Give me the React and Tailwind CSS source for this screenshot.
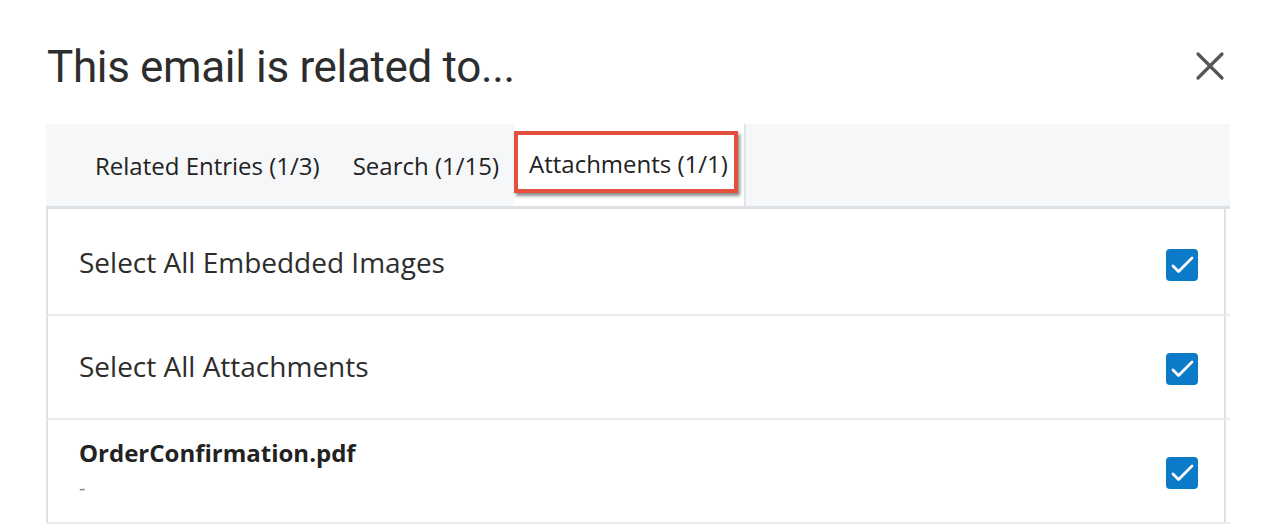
import React, { useState } from 'react';

const Check = ({ checked, onClick }) => (
  <button
    onClick={onClick}
    className={`w-8 h-8 rounded-[4px] flex items-center justify-center mt-[4px] ${checked ? 'bg-[#0b7ac9]' : 'bg-white border-2 border-[#9aa3ad]'}`}
  >
    {checked && (
      <svg width="32" height="32" viewBox="0 0 32 32" fill="none">
        <path d="M7 17l5.5 5.5L26 9" stroke="white" strokeWidth="2.8" strokeLinecap="round" strokeLinejoin="round" />
      </svg>
    )}
  </button>
);

const App = () => {
  const [checks, setChecks] = useState([true, true, true]);
  const toggle = (i) => setChecks((c) => c.map((v, j) => (j === i ? !v : v)));

  const tabs = ['Related Entries (1/3)', 'Search (1/15)', 'Attachments (1/1)'];

  return (
    <div className="w-[1274px] h-[532px] bg-white overflow-hidden font-['Open_Sans',sans-serif] text-[#2d2d2d]">
      <div className="flex items-start justify-between pl-[47px] pr-[48px] pt-[45px] h-[124px]">
        <h1 className="font-['Roboto',sans-serif] text-[44px] leading-none text-[#2d2d2d] tracking-[-0.35px]">
          This email is related to...
        </h1>
        <button className="w-8 h-8 flex items-center justify-center mt-[5px]">
          <svg width="30" height="30" viewBox="0 0 30 30">
            <path d="M3 3l24 24M27 3L3 27" stroke="#555" strokeWidth="3.2" strokeLinecap="round" />
          </svg>
        </button>
      </div>

      <div className="ml-[46px] w-[1184px]">
        <div className="h-[85px] bg-[#f6f7f9] border-b-[3px] border-[#dde0e4] flex pl-[49px]">
          {tabs.map((t, i) =>
            i === 2 ? (
              <div key={t} className="bg-white border-r-2 border-[#e1e4e8] flex items-start pt-[7px] pr-[6px]">
                <div className="border-[4px] border-[#e4503e] shadow-[2px_3px_3px_rgba(0,0,0,0.45)] h-[62px] pl-[11px] pr-[6px] pt-[3px] flex items-center text-[24px] text-[#222]">
                  {t}
                </div>
              </div>
            ) : (
              <div key={t} className={`flex items-center pt-[2px] text-[24px] text-[#222] ${i === 0 ? 'pr-[33px]' : 'pr-[15px]'}`}>
                {t}
              </div>
            )
          )}
        </div>

        {[
          { label: 'Select All Embedded Images' },
          { label: 'Select All Attachments' },
          { label: 'OrderConfirmation.pdf', sub: '-' },
        ].map((r, i) => (
          <div key={i} className="border-b-2 border-[#ebebeb]">
            <div className={`w-[1180px] ${i === 0 ? 'h-[105px] pt-[3px]' : 'h-[102px]'} border-l-2 border-r-2 border-[#dde0e4] flex items-center justify-between pl-[31px] pr-[26px]`}>
              {r.sub ? (
                <div className="flex flex-col -mt-[2px]">
                  <span className="text-[24px] font-bold leading-[32px] text-[#222]">{r.label}</span>
                  <span className="text-[20px] leading-[30px] text-[#888] mt-[4px]">{r.sub}</span>
                </div>
              ) : (
                <span className="text-[28px] leading-none text-[#2d2d2d] -mt-[2px]">{r.label}</span>
              )}
              <Check checked={checks[i]} onClick={() => toggle(i)} />
            </div>
          </div>
        ))}
      </div>
    </div>
  );
};

export default App;
